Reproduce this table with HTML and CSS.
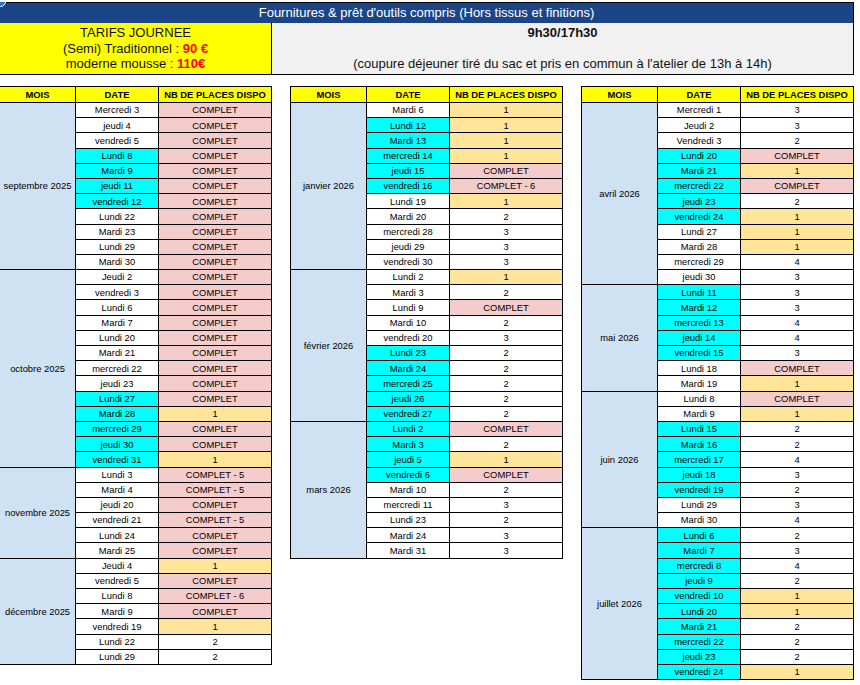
FILE: index.html
```html
<!DOCTYPE html>
<html lang="fr">
<head>
<meta charset="utf-8">
<title>Tarifs journée</title>
<link rel="stylesheet" href="styles.css">
</head>
<body>
<div class="dot"></div>
<div class="page">
  <div class="top">
    <div class="title">Fournitures &amp; prêt d'outils compris (Hors tissus et finitions)</div>
    <div class="tarifs">
      <div>TARIFS JOURNEE</div>
      <div>(Semi) Traditionnel : <span class="red">90 €</span></div>
      <div>moderne mousse : <span class="red">110€</span></div>
    </div>
    <div class="hours">
      <div class="bold">9h30/17h30</div>
      <div>&nbsp;</div>
      <div>(coupure déjeuner tiré du sac et pris en commun à l'atelier de 13h à 14h)</div>
    </div>
  </div>

  <div class="tables">
    <div class="tbl">
      <div class="h">MOIS</div><div class="h">DATE</div><div class="h">NB DE PLACES DISPO</div>

      <div class="m r11">septembre 2025</div>
      <div class="d">Mercredi 3</div><div class="n k">COMPLET</div>
      <div class="d">jeudi 4</div><div class="n k">COMPLET</div>
      <div class="d">vendredi 5</div><div class="n k">COMPLET</div>
      <div class="d c">Lundi 8</div><div class="n k">COMPLET</div>
      <div class="d c">Mardi 9</div><div class="n k">COMPLET</div>
      <div class="d c">jeudi 11</div><div class="n k">COMPLET</div>
      <div class="d c">vendredi 12</div><div class="n k">COMPLET</div>
      <div class="d">Lundi 22</div><div class="n k">COMPLET</div>
      <div class="d">Mardi 23</div><div class="n k">COMPLET</div>
      <div class="d">Lundi 29</div><div class="n k">COMPLET</div>
      <div class="d">Mardi 30</div><div class="n k">COMPLET</div>

      <div class="m r13">octobre 2025</div>
      <div class="d">Jeudi 2</div><div class="n k">COMPLET</div>
      <div class="d">vendredi 3</div><div class="n k">COMPLET</div>
      <div class="d">Lundi 6</div><div class="n k">COMPLET</div>
      <div class="d">Mardi 7</div><div class="n k">COMPLET</div>
      <div class="d">Lundi 20</div><div class="n k">COMPLET</div>
      <div class="d">Mardi 21</div><div class="n k">COMPLET</div>
      <div class="d">mercredi 22</div><div class="n k">COMPLET</div>
      <div class="d">jeudi 23</div><div class="n k">COMPLET</div>
      <div class="d c">Lundi 27</div><div class="n k">COMPLET</div>
      <div class="d c">Mardi 28</div><div class="n y">1</div>
      <div class="d c">mercredi 29</div><div class="n k">COMPLET</div>
      <div class="d c">jeudi 30</div><div class="n k">COMPLET</div>
      <div class="d c">vendredi 31</div><div class="n y">1</div>

      <div class="m r6">novembre 2025</div>
      <div class="d">Lundi 3</div><div class="n k">COMPLET - 5</div>
      <div class="d">Mardi 4</div><div class="n k">COMPLET - 5</div>
      <div class="d">jeudi 20</div><div class="n k">COMPLET</div>
      <div class="d">vendredi 21</div><div class="n k">COMPLET - 5</div>
      <div class="d">Lundi 24</div><div class="n k">COMPLET</div>
      <div class="d">Mardi 25</div><div class="n k">COMPLET</div>

      <div class="m r7">décembre 2025</div>
      <div class="d">Jeudi 4</div><div class="n y">1</div>
      <div class="d">vendredi 5</div><div class="n k">COMPLET</div>
      <div class="d">Lundi 8</div><div class="n k">COMPLET - 6</div>
      <div class="d">Mardi 9</div><div class="n k">COMPLET</div>
      <div class="d">vendredi 19</div><div class="n y">1</div>
      <div class="d">Lundi 22</div><div class="n">2</div>
      <div class="d">Lundi 29</div><div class="n">2</div>
    </div>

    <div class="tbl">
      <div class="h">MOIS</div><div class="h">DATE</div><div class="h">NB DE PLACES DISPO</div>

      <div class="m r11">janvier 2026</div>
      <div class="d">Mardi 6</div><div class="n y">1</div>
      <div class="d c">Lundi 12</div><div class="n y">1</div>
      <div class="d c">Mardi 13</div><div class="n y">1</div>
      <div class="d c">mercredi 14</div><div class="n y">1</div>
      <div class="d c">jeudi 15</div><div class="n k">COMPLET</div>
      <div class="d c">vendredi 16</div><div class="n k">COMPLET - 6</div>
      <div class="d">Lundi 19</div><div class="n y">1</div>
      <div class="d">Mardi 20</div><div class="n">2</div>
      <div class="d">mercredi 28</div><div class="n">3</div>
      <div class="d">jeudi 29</div><div class="n">3</div>
      <div class="d">vendredi 30</div><div class="n">3</div>

      <div class="m r10">février 2026</div>
      <div class="d">Lundi 2</div><div class="n y">1</div>
      <div class="d">Mardi 3</div><div class="n">2</div>
      <div class="d">Lundi 9</div><div class="n k">COMPLET</div>
      <div class="d">Mardi 10</div><div class="n">2</div>
      <div class="d">vendredi 20</div><div class="n">3</div>
      <div class="d c">Lundi 23</div><div class="n">2</div>
      <div class="d c">Mardi 24</div><div class="n">2</div>
      <div class="d c">mercredi 25</div><div class="n">2</div>
      <div class="d c">jeudi 26</div><div class="n">2</div>
      <div class="d c">vendredi 27</div><div class="n">2</div>

      <div class="m r9">mars 2026</div>
      <div class="d c">Lundi 2</div><div class="n k">COMPLET</div>
      <div class="d c">Mardi 3</div><div class="n">2</div>
      <div class="d c">jeudi 5</div><div class="n y">1</div>
      <div class="d c">vendredi 6</div><div class="n k">COMPLET</div>
      <div class="d">Mardi 10</div><div class="n">2</div>
      <div class="d">mercredi 11</div><div class="n">3</div>
      <div class="d">Lundi 23</div><div class="n">2</div>
      <div class="d">Mardi 24</div><div class="n">3</div>
      <div class="d">Mardi 31</div><div class="n">3</div>
    </div>

    <div class="tbl">
      <div class="h">MOIS</div><div class="h">DATE</div><div class="h">NB DE PLACES DISPO</div>

      <div class="m r12">avril 2026</div>
      <div class="d">Mercredi 1</div><div class="n">3</div>
      <div class="d">Jeudi 2</div><div class="n">3</div>
      <div class="d">Vendredi 3</div><div class="n">2</div>
      <div class="d c">Lundi 20</div><div class="n k">COMPLET</div>
      <div class="d c">Mardi 21</div><div class="n y">1</div>
      <div class="d c">mercredi 22</div><div class="n k">COMPLET</div>
      <div class="d c">jeudi 23</div><div class="n">2</div>
      <div class="d c">vendredi 24</div><div class="n y">1</div>
      <div class="d">Lundi 27</div><div class="n y">1</div>
      <div class="d">Mardi 28</div><div class="n y">1</div>
      <div class="d">mercredi 29</div><div class="n">4</div>
      <div class="d">jeudi 30</div><div class="n">3</div>

      <div class="m r7">mai 2026</div>
      <div class="d c">Lundi 11</div><div class="n">3</div>
      <div class="d c">Mardi 12</div><div class="n">3</div>
      <div class="d c">mercredi 13</div><div class="n">4</div>
      <div class="d c">jeudi 14</div><div class="n">4</div>
      <div class="d c">vendredi 15</div><div class="n">3</div>
      <div class="d">Lundi 18</div><div class="n k">COMPLET</div>
      <div class="d">Mardi 19</div><div class="n y">1</div>

      <div class="m r9">juin 2026</div>
      <div class="d">Lundi 8</div><div class="n k">COMPLET</div>
      <div class="d">Mardi 9</div><div class="n y">1</div>
      <div class="d c">Lundi 15</div><div class="n">2</div>
      <div class="d c">Mardi 16</div><div class="n">2</div>
      <div class="d c">mercredi 17</div><div class="n">4</div>
      <div class="d c">jeudi 18</div><div class="n">3</div>
      <div class="d c">vendredi 19</div><div class="n">2</div>
      <div class="d">Lundi 29</div><div class="n">3</div>
      <div class="d">Mardi 30</div><div class="n">4</div>

      <div class="m r10">juillet 2026</div>
      <div class="d c">Lundi 6</div><div class="n">2</div>
      <div class="d c">Mardi 7</div><div class="n">3</div>
      <div class="d c">mercredi 8</div><div class="n">4</div>
      <div class="d c">jeudi 9</div><div class="n">2</div>
      <div class="d c">vendredi 10</div><div class="n y">1</div>
      <div class="d c">Lundi 20</div><div class="n y">1</div>
      <div class="d c">Mardi 21</div><div class="n">2</div>
      <div class="d c">mercredi 22</div><div class="n">2</div>
      <div class="d c">jeudi 23</div><div class="n">2</div>
      <div class="d c">vendredi 24</div><div class="n y">1</div>
    </div>
  </div>
</div>
</body>
</html>
```

FILE: styles.css
```css
html, body {
  background: #ffffff;
}
body {
  margin: 2px 0 0 -1px;
  font-family: "Liberation Sans", Arial, sans-serif;
  color: #000000;
  position: relative;
}
.dot {
  position: absolute;
  left: -4px;
  top: -6px;
  width: 9px;
  height: 9px;
  border-radius: 50%;
  background: #2f6fd8;
  border: 1px solid #ffffff;
  z-index: 2;
}
.page {
  width: 855px;
}
.top {
  display: grid;
  grid-template-columns: 271px 1fr;
  grid-template-rows: 20px 51px;
  column-gap: 1px;
  background: #000000;
  border: 1px solid #000000;
}
.title {
  grid-column: 1 / 3;
  background: #1c4587;
  color: #ffffff;
  font-size: 13px;
  display: flex;
  align-items: center;
  justify-content: center;
  padding-bottom: 1px;
}
.tarifs,
.hours {
  display: flex;
  flex-direction: column;
  justify-content: center;
  align-items: center;
  font-size: 13px;
  line-height: 15.5px;
  color: #111111;
}
.tarifs {
  background: #ffff00;
}
.hours {
  background: #f1f1f1;
}
.red {
  color: #ff0000;
  font-weight: bold;
}
.bold {
  font-weight: bold;
}
.tables {
  display: flex;
  gap: 18px;
  align-items: flex-start;
  margin-top: 11px;
}
.tbl {
  width: 273px;
  display: grid;
  grid-template-columns: 75px 82px 112px;
  grid-template-rows: 15px;
  grid-auto-rows: 14.2px;
  gap: 1px;
  padding: 1px;
  background: #000000;
  font-size: 9.4px;
}
.tbl > div {
  display: flex;
  align-items: center;
  justify-content: center;
  white-space: nowrap;
  background: #ffffff;
  line-height: 1;
}
.h {
  background: #ffff00 !important;
  font-weight: bold;
}
.m {
  grid-column: 1;
  background: #cfe2f3 !important;
}
.d {
  grid-column: 2;
}
.n {
  grid-column: 3;
}
.c {
  background: #00ffff !important;
}
.k {
  background: #f4cccc !important;
}
.y {
  background: #ffe599 !important;
}
.r6 { grid-row: span 6; }
.r7 { grid-row: span 7; }
.r9 { grid-row: span 9; }
.r10 { grid-row: span 10; }
.r11 { grid-row: span 11; }
.r12 { grid-row: span 12; }
.r13 { grid-row: span 13; }
```
